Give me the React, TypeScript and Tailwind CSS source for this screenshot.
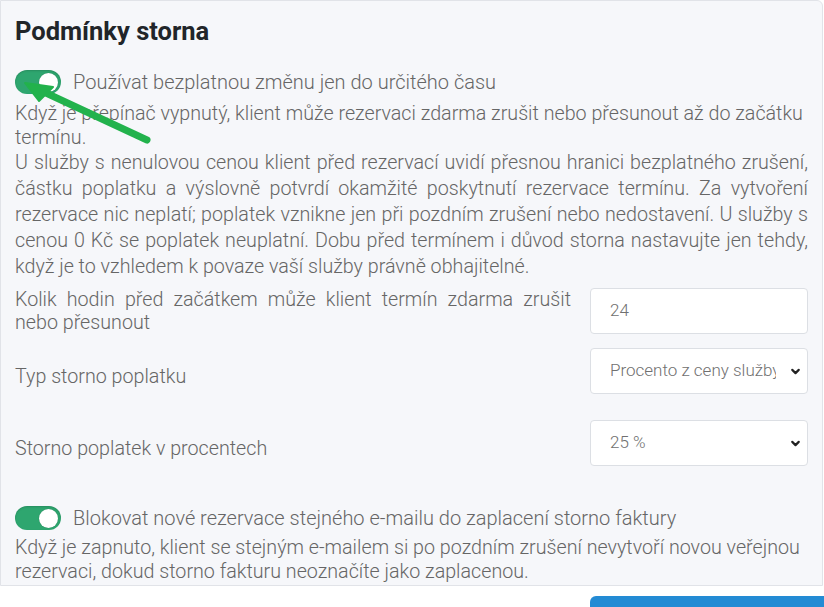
import { ChevronDown } from 'lucide-react';

const font = { fontFamily: '"Roboto Light", Roboto, "Liberation Sans", sans-serif' };
const heading = { fontFamily: 'Roboto, "Liberation Sans", sans-serif' };

function Toggle() {
  return (
    <span className="relative inline-flex h-[24px] w-[46px] shrink-0 items-center rounded-full bg-[#2ea66f] shadow-[inset_0_1px_2px_rgba(0,0,0,0.15)]">
      <span className="absolute right-[3px] h-[19px] w-[19px] rounded-full bg-white shadow-[0_0_1px_rgba(0,0,0,0.3)]" />
    </span>
  );
}

function Field({
  label,
  children,
  className,
  labelClass,
}: {
  label: string;
  children: React.ReactNode;
  className?: string;
  labelClass?: string;
}) {
  return (
    <div className={`flex items-start gap-[17px] ${className ?? ''}`}>
      <label className={`flex-1 text-justify leading-[23px] ${labelClass ?? ''}`}>{label}</label>
      <div className="w-[218px] shrink-0">{children}</div>
    </div>
  );
}

function Select({ value }: { value: string }) {
  return (
    <div className="flex h-[46px] items-center justify-between rounded border border-[#dcdfe4] bg-white pl-[19px] pr-[5px] text-[17px] text-[#707070]">
      <span className="w-[166px] overflow-hidden whitespace-nowrap">{value}</span>
      <ChevronDown size={13} strokeWidth={4} className="shrink-0 text-[#222]" />
    </div>
  );
}

export default function App() {
  return (
    <div className="relative h-[607px] w-[824px] overflow-hidden bg-white" style={font}>
      <section className="mr-[1px] h-[586px] rounded-tr-md border border-[#e1e3e8] bg-[#f6f7fa] px-[14px] pt-[14px] text-[19.7px] font-light text-[#666]">
        <h2 className="text-[25.5px] font-bold leading-[32px] text-[#212529]" style={heading}>
          Podmínky storna
        </h2>

        <div className="mt-[22px] flex items-center gap-3">
          <Toggle />
          <span className="text-[20px] leading-[26px]">Používat bezplatnou změnu jen do určitého času</span>
        </div>
        <p className="mt-[7px] leading-[24px]">
          Když je přepínač vypnutý, klient může rezervaci zdarma zrušit nebo přesunout až do začátku termínu.
        </p>
        <p className="text-justify leading-[26px]">
          U služby s nenulovou cenou klient před rezervací uvidí přesnou hranici bezplatného zrušení, částku poplatku a
          výslovně potvrdí okamžité poskytnutí rezervace termínu. Za vytvoření rezervace nic neplatí; poplatek vznikne
          jen při pozdním zrušení nebo nedostavení. U služby s cenou 0 Kč se poplatek neuplatní. Dobu před termínem i
          důvod storna nastavujte jen tehdy, když je to vzhledem k povaze vaší služby právně obhajitelné.
        </p>

        <Field
          label="Kolik hodin před začátkem může klient termín zdarma zrušit nebo přesunout"
          className="mt-[8px]"
          labelClass="pr-[2px]"
        >
          <div className="flex h-[46px] items-center rounded border border-[#dcdfe4] bg-white px-[19px] text-[17px] text-[#707070]">
            24
          </div>
        </Field>
        <Field label="Typ storno poplatku" className="mt-[14px]" labelClass="pt-[17px]">
          <Select value="Procento z ceny služby" />
        </Field>
        <Field label="Storno poplatek v procentech" className="mt-[26px]" labelClass="pt-[17px]">
          <Select value="25 %" />
        </Field>

        <div className="mt-[39px] flex items-center gap-3">
          <Toggle />
          <span className="text-[20px] leading-[26px]">
            Blokovat nové rezervace stejného e-mailu do zaplacení storno faktury
          </span>
        </div>
        <p className="mt-[5px] leading-[24px]">
          Když je zapnuto, klient se stejným e-mailem si po pozdním zrušení nevytvoří novou veřejnou rezervaci, dokud
          storno fakturu neoznačíte jako zaplacenou.
        </p>
      </section>

      {/* callout arrow pointing at the first switch */}
      <svg className="pointer-events-none absolute left-0 top-0" width="200" height="160" viewBox="0 0 200 160">
        <line x1="147" y1="140" x2="46" y2="93" stroke="#22b24c" strokeWidth="7" strokeLinecap="round" />
        <polygon points="25,83 53,87 39,101" fill="#22b24c" stroke="#22b24c" strokeWidth="2" strokeLinejoin="round" />
      </svg>

      <div className="absolute bottom-0 right-0 h-[11px] w-[234px] rounded-tl-md bg-[#238bd4]" />
    </div>
  );
}
